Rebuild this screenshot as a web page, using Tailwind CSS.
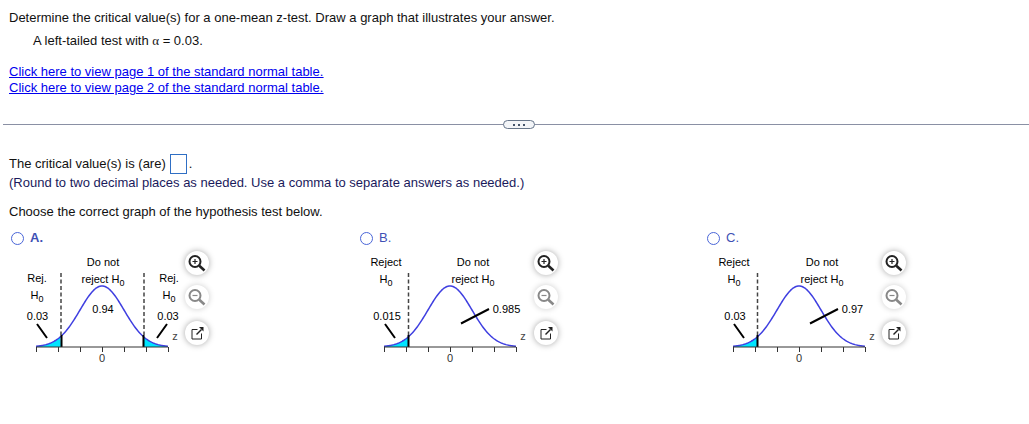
<!DOCTYPE html>
<html lang="en">

<head>
    <meta charset="UTF-8">
    <meta name="viewport" content="width=device-width, initial-scale=1.0">
    <title>Hypothesis test</title>
    <script src="https://cdn.jsdelivr.net/npm/@tailwindcss/browser@4"></script>
</head>

<body class="bg-white overflow-hidden">
    <div class="h-[424px] text-[13px] leading-4 text-[#111] [font-family:'Liberation_Sans',Arial,sans-serif]">
        <div class="pl-[9px] pt-[10px]">
            <p>Determine the critical value(s) for a one-mean z-test. Draw a graph that illustrates your answer.</p>
            <p class="mt-[7px] pl-6">A left-tailed test with <span class="[font-family:'Liberation_Serif',serif]">α</span> = 0.03.</p>
            <div class="mt-[15px] text-[#0000ee] underline">
                <a href="#" class="block">Click here to view page 1 of the standard normal table.</a>
                <a href="#" class="block">Click here to view page 2 of the standard normal table.</a>
            </div>
        </div>

        <div class="relative mt-[28px] ml-[3px] h-px bg-[#8a90a4]">
            <div class="absolute left-[500px] top-[-4px] flex h-[9px] w-[32px] items-center justify-center gap-[3px] rounded-full border border-[#66758a] bg-[#f3f5f8]">
                <span class="h-[2px] w-[2px] bg-[#44546a]"></span>
                <span class="h-[2px] w-[2px] bg-[#44546a]"></span>
                <span class="h-[2px] w-[2px] bg-[#44546a]"></span>
            </div>
        </div>

        <div class="pl-[9px] pt-[29px]">
            <p class="flex h-5 items-center">The critical value(s) is (are)<span class="ml-[4px] mr-[2px] h-5 w-[17px] border border-[#2f6fc4]"></span>.</p>
            <p class="mt-[1px] text-[#1a1a5c]">(Round to two decimal places as needed. Use a comma to separate answers as needed.)</p>
            <p class="mt-[13px]">Choose the correct graph of the hypothesis test below.</p>
        </div>

        <div class="flex pt-[10px]">
            <!-- A -->
            <div class="w-[349px] shrink-0">
                <div class="flex h-4 items-center pl-[11px]">
                    <span class="h-[13px] w-[13px] rounded-full border-[1.5px] border-[#4a66d8]"></span>
                    <span class="ml-[6px] text-[13px] font-bold text-[#3f51b5]">A.</span>
                </div>
                <div class="flex pl-[20px] pt-[4px]">
                    <svg class="graph h-[116px] w-[165px] text-[11px]" viewBox="20 250 165 116">
                        <path class="tail" data-c="102" data-a="36.5" data-b="61" fill="#00e5ff"></path>
                        <path class="tail" data-c="102" data-a="144" data-b="168" fill="#00e5ff"></path>
                        <path class="curve" data-c="102" fill="none" stroke="#3f3fe0" stroke-width="1.5"></path>
                        <path d="M61 273V335M144 273V335" stroke="#444" stroke-width="1.5" stroke-dasharray="4 2.5"></path>
                        <path d="M61.5 335V347M143.5 335V347" stroke="#000" stroke-width="2"></path>
                        <path d="M36.5 347H168M36.5 347V352M58.5 347V352M80.5 347V352M102.5 347V352M124.5 347V352M146.5 347V352M168.5 347V352" stroke="#333" fill="none"></path>
                        <path d="M37 324L47 338M167 324L157 338" stroke="#000" stroke-width="2"></path>
                        <text x="103" y="266" text-anchor="middle">Do not</text>
                        <text x="103" y="283" text-anchor="middle">reject H<tspan font-size="9" dy="3">0</tspan></text>
                        <text x="37" y="282" text-anchor="middle">Rej.</text>
                        <text x="37" y="299" text-anchor="middle">H<tspan font-size="9" dy="3">0</tspan></text>
                        <text x="37.5" y="320" text-anchor="middle">0.03</text>
                        <text x="169" y="282" text-anchor="middle">Rej.</text>
                        <text x="169" y="299" text-anchor="middle">H<tspan font-size="9" dy="3">0</tspan></text>
                        <text x="168" y="320" text-anchor="middle">0.03</text>
                        <text x="103" y="313" text-anchor="middle">0.94</text>
                        <text x="175" y="340" text-anchor="middle" fill="#444">z</text>
                        <text x="102" y="362" text-anchor="middle" fill="#333">0</text>
                    </svg>
                    <div class="zoom-btns"></div>
                </div>
            </div>

            <!-- B -->
            <div class="w-[349px] shrink-0">
                <div class="flex h-4 items-center pl-[11px]">
                    <span class="h-[13px] w-[13px] rounded-full border-[1.5px] border-[#4a66d8]"></span>
                    <span class="ml-[6px] text-[13px] text-[#3f51b5]">B.</span>
                </div>
                <div class="flex pl-[20px] pt-[4px]">
                    <svg class="graph h-[116px] w-[165px] text-[11px]" viewBox="369 250 165 116">
                        <path class="tail" data-c="450" data-a="384" data-b="409" fill="#00e5ff"></path>
                        <path class="curve" data-c="450" fill="none" stroke="#3f3fe0" stroke-width="1.5"></path>
                        <path d="M408.5 273V335" stroke="#444" stroke-width="1.5" stroke-dasharray="4 2.5"></path>
                        <path d="M408.5 335V347" stroke="#000" stroke-width="2"></path>
                        <path d="M384 347H516M384.5 347V352M406.5 347V352M428.5 347V352M450.5 347V352M472.5 347V352M494.5 347V352M516.5 347V352" stroke="#333" fill="none"></path>
                        <path d="M385 324L395 338M461 323.5L489 309" stroke="#000" stroke-width="2"></path>
                        <text x="386" y="266" text-anchor="middle">Reject</text>
                        <text x="386" y="283" text-anchor="middle">H<tspan font-size="9" dy="3">0</tspan></text>
                        <text x="473" y="266" text-anchor="middle">Do not</text>
                        <text x="473" y="283" text-anchor="middle">reject H<tspan font-size="9" dy="3">0</tspan></text>
                        <text x="387" y="320" text-anchor="middle">0.015</text>
                        <text x="506.5" y="313" text-anchor="middle">0.985</text>
                        <text x="523" y="340" text-anchor="middle" fill="#444">z</text>
                        <text x="450" y="362" text-anchor="middle" fill="#333">0</text>
                    </svg>
                    <div class="zoom-btns"></div>
                </div>
            </div>

            <!-- C -->
            <div class="flex-1">
                <div class="flex h-4 items-center pl-[9px]">
                    <span class="h-[13px] w-[13px] rounded-full border-[1.5px] border-[#4a66d8]"></span>
                    <span class="ml-[6px] text-[13px] text-[#3f51b5]">C.</span>
                </div>
                <div class="flex pl-[19px] pt-[4px]">
                    <svg class="graph h-[116px] w-[165px] text-[11px]" viewBox="717 250 165 116">
                        <path class="tail" data-c="799" data-a="733" data-b="758" fill="#00e5ff"></path>
                        <path class="curve" data-c="799" fill="none" stroke="#3f3fe0" stroke-width="1.5"></path>
                        <path d="M757.5 273V335" stroke="#444" stroke-width="1.5" stroke-dasharray="4 2.5"></path>
                        <path d="M757.5 335V347" stroke="#000" stroke-width="2"></path>
                        <path d="M733 347H865M733.5 347V352M755.5 347V352M777.5 347V352M799.5 347V352M821.5 347V352M843.5 347V352M865.5 347V352" stroke="#333" fill="none"></path>
                        <path d="M734 324L744 338M810 323.5L838 309" stroke="#000" stroke-width="2"></path>
                        <text x="734" y="266" text-anchor="middle">Reject</text>
                        <text x="734" y="283" text-anchor="middle">H<tspan font-size="9" dy="3">0</tspan></text>
                        <text x="822" y="266" text-anchor="middle">Do not</text>
                        <text x="822" y="283" text-anchor="middle">reject H<tspan font-size="9" dy="3">0</tspan></text>
                        <text x="735" y="320" text-anchor="middle">0.03</text>
                        <text x="852.5" y="313" text-anchor="middle">0.97</text>
                        <text x="872" y="340" text-anchor="middle" fill="#444">z</text>
                        <text x="799" y="362" text-anchor="middle" fill="#333">0</text>
                    </svg>
                    <div class="zoom-btns"></div>
                </div>
            </div>
        </div>
    </div>

    <script>
        // normal curve height in page pixels, 22px per unit of z
        const curveY = (x, c) => 347 - 61 * Math.exp(-(((x - c) / 22) ** 2) / 2)

        document.querySelectorAll(".curve").forEach(p => {
            const c = +p.dataset.c
            let d = ""
            for (let x = c - 66; x <= c + 66; x++) {
                d += (d ? "L" : "M") + x + " " + curveY(x, c).toFixed(2)
            }
            p.setAttribute("d", d)
        })

        document.querySelectorAll(".tail").forEach(p => {
            const c = +p.dataset.c, a = +p.dataset.a, b = +p.dataset.b
            let d = "M" + a + " 347"
            for (let x = a; x <= b; x++) {
                d += "L" + x + " " + curveY(x, c).toFixed(2)
            }
            p.setAttribute("d", d + "L" + b + " 347Z")
        })

        // same three round buttons beside each graph
        document.querySelectorAll(".zoom-btns").forEach(el => {
            el.innerHTML = `
            <div class="mt-[1px] flex h-6 w-6 items-center justify-center rounded-full bg-white shadow-[0_0_6px_rgba(0,0,0,0.35)]">
                <svg class="h-5 w-5" viewBox="0 0 20 20" fill="none" stroke="#222"><circle cx="8" cy="8.5" r="5.5" stroke-width="2"/><path d="M5.5 8.5H10.5M8 6V11" stroke-width="1.2"/><path d="M12.3 12.8L17.5 17.5" stroke-width="2.6"/></svg>
            </div>
            <div class="mt-[10px] flex h-6 w-6 items-center justify-center rounded-full bg-white shadow-[0_0_6px_rgba(0,0,0,0.2)]">
                <svg class="h-5 w-5" viewBox="0 0 20 20" fill="none" stroke="#888"><circle cx="8" cy="8.5" r="5.5" stroke-width="2"/><path d="M5.5 8.5H10.5" stroke-width="1.2"/><path d="M12.3 12.8L17.5 17.5" stroke-width="2.6"/></svg>
            </div>
            <div class="mt-[12px] flex h-6 w-6 items-center justify-center rounded-full bg-white shadow-[0_0_6px_rgba(0,0,0,0.35)]">
                <svg class="h-5 w-5" viewBox="0 0 20 20" fill="none" stroke="#222" stroke-width="1"><path d="M10.5 6.5H5V16H14.5V10.5"/><path d="M9.5 11.5L14.5 6.5" stroke-width="1.4"/><path d="M12 4H16.5V8.5Z" fill="#222" stroke="none"/></svg>
            </div>`
        })
    </script>
</body>

</html>
